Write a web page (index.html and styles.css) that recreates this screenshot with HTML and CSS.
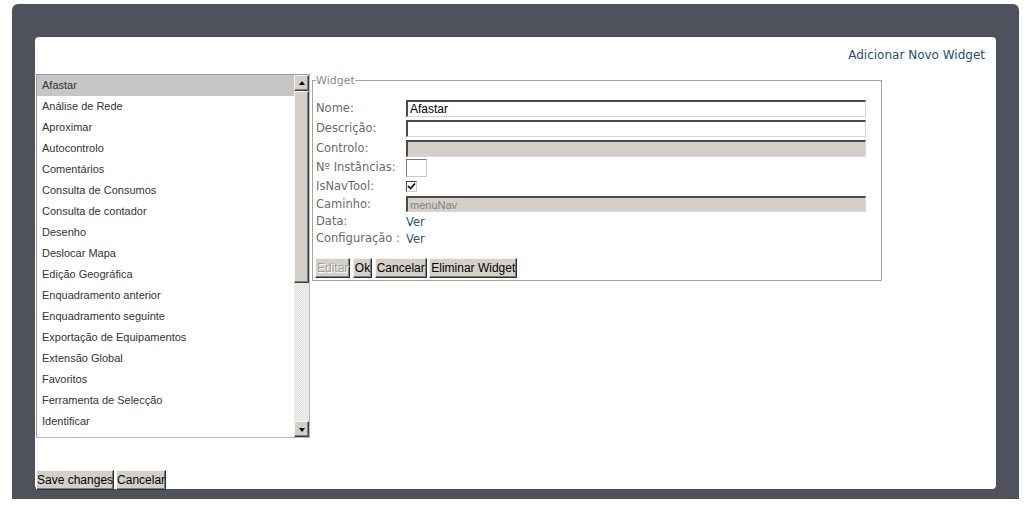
FILE: index.html
```html
<!DOCTYPE html>
<html lang="pt">
<head>
<meta charset="utf-8">
<title>Widgets</title>
<link rel="stylesheet" href="styles.css">
</head>
<body>
<div class="frame">
  <div class="panel">
    <div class="header"><a class="add-link" href="#">Adicionar Novo Widget</a></div>
    <div class="main">
      <div class="listbox">
        <ul class="items">
          <li class="selected">Afastar</li>
          <li>Análise de Rede</li>
          <li>Aproximar</li>
          <li>Autocontrolo</li>
          <li>Comentários</li>
          <li>Consulta de Consumos</li>
          <li>Consulta de contador</li>
          <li>Desenho</li>
          <li>Deslocar Mapa</li>
          <li>Edição Geográfica</li>
          <li>Enquadramento anterior</li>
          <li>Enquadramento seguinte</li>
          <li>Exportação de Equipamentos</li>
          <li>Extensão Global</li>
          <li>Favoritos</li>
          <li>Ferramenta de Selecção</li>
          <li>Identificar</li>
        </ul>
        <div class="scrollbar">
          <div class="sb-btn"><span class="arrow-up"></span></div>
          <div class="sb-thumb"></div>
          <div class="sb-track"></div>
          <div class="sb-btn"><span class="arrow-down"></span></div>
        </div>
      </div>
      <fieldset class="widget">
        <legend>Widget</legend>
        <div class="row r20"><span class="lbl">Nome:</span><input class="text" type="text" value="Afastar"></div>
        <div class="row r20"><span class="lbl">Descrição:</span><input class="text" type="text" value=""></div>
        <div class="row r20"><span class="lbl">Controlo:</span><input class="text disabled" type="text" value="" disabled></div>
        <div class="row r19"><span class="lbl">Nº Instâncias:</span><input class="small" type="text" value=""></div>
        <div class="row r18"><span class="lbl">IsNavTool:</span><span class="check"><svg width="9" height="9" viewBox="0 0 9 9"><path d="M1 4 L3.5 6.5 L8 1.5" fill="none" stroke="#000" stroke-width="1.6"/></svg></span></div>
        <div class="row r18"><span class="lbl">Caminho:</span><input class="text disabled path" type="text" value="menuNav" disabled></div>
        <div class="row r17"><span class="lbl">Data:</span><a class="link" href="#">Ver</a></div>
        <div class="row r17"><span class="lbl">Configuração :</span><a class="link" href="#">Ver</a></div>
        <div class="actions">
          <button class="btn" disabled>Editar</button>
          <button class="btn">Ok</button>
          <button class="btn">Cancelar</button>
          <button class="btn">Eliminar Widget</button>
        </div>
      </fieldset>
    </div>
    <div class="footer">
      <button class="btn">Save changes</button>
      <button class="btn">Cancelar</button>
    </div>
  </div>
</div>
</body>
</html>
```
FILE: styles.css
```css
html, body {
  margin: 0;
  padding: 0;
  background: #fff;
}

body {
  font-family: "DejaVu Sans", Verdana, sans-serif;
  font-size: 11px;
}

.frame {
  margin: 4px 5px 0 12px;
  padding: 33px 23px 10px 23px;
  background: #4f525d;
  border-radius: 6px 6px 0 0;
}

.panel {
  background: #fff;
  border-radius: 4px;
  height: 452px;
  box-sizing: border-box;
}

.header {
  height: 37px;
  box-sizing: border-box;
  padding: 11px 11px 0 0;
  display: flex;
  justify-content: flex-end;
  line-height: 14px;
}

.add-link {
  color: #24506e;
  text-decoration: none;
  font-family: "DejaVu Sans", Verdana, sans-serif;
  font-size: 12px;
}

.link {
  color: #2a5576;
  text-decoration: none;
  font-family: "DejaVu Sans", Verdana, sans-serif;
  font-size: 11.5px;
}

.main {
  display: flex;
  align-items: flex-start;
  height: 364px;
}

.listbox {
  margin-left: 1px;
  width: 274px;
  height: 364px;
  box-sizing: border-box;
  border: 1px solid #9a9a9a;
  border-right-color: #b8b8b8;
  border-bottom-color: #b8b8b8;
  display: flex;
  overflow: hidden;
}

.items {
  list-style: none;
  margin: 0;
  padding: 0;
  flex: 1;
  overflow: hidden;
  font-family: "Liberation Sans", Arial, sans-serif;
  font-size: 11px;
  color: #333;
}

.items li {
  height: 21px;
  line-height: 21px;
  padding-left: 5px;
  white-space: nowrap;
}

.items li.selected {
  background: #c6c6c6;
}

.scrollbar {
  width: 15px;
  display: flex;
  flex-direction: column;
}

.sb-btn {
  height: 16px;
  box-sizing: border-box;
  background: #d4d0c8;
  border: 1px solid;
  border-color: #f4f4f4 #404040 #404040 #f4f4f4;
  box-shadow: inset -1px -1px #808080;
  display: flex;
  align-items: center;
  justify-content: center;
}

.arrow-up {
  width: 0;
  height: 0;
  border-left: 3.5px solid transparent;
  border-right: 3.5px solid transparent;
  border-bottom: 4px solid #000;
  margin-bottom: 1px;
}

.arrow-down {
  width: 0;
  height: 0;
  border-left: 3.5px solid transparent;
  border-right: 3.5px solid transparent;
  border-top: 4px solid #000;
  margin-top: 1px;
}

.sb-thumb {
  height: 192px;
  box-sizing: border-box;
  background: #d4d0c8;
  border: 1px solid;
  border-color: #f4f4f4 #404040 #404040 #f4f4f4;
  box-shadow: inset -1px -1px #808080;
}

.sb-track {
  flex: 1;
  background: repeating-conic-gradient(#f2f2f2 0 25%, #e0e0e0 0 50%) 0 0 / 2px 2px;
}

.widget {
  margin: 0 0 0 2px;
  width: 570px;
  box-sizing: border-box;
  padding: 11px 3px 2px 3px;
  border: 1px solid #a3a3a3;
  min-width: 0;
}

.widget legend {
  padding: 0;
  line-height: 13px;
  font-size: 11px;
  color: #8a8a8a;
}

.row {
  display: flex;
  align-items: center;
}

.r20 { height: 20px; }
.r19 { height: 19px; }
.r18 { height: 18px; }
.r17 { height: 17px; }

.lbl {
  width: 90px;
  flex: none;
  color: #6a6a6a;
  white-space: nowrap;
  line-height: 13px;
  font-size: 11.5px;
}

.text {
  width: 460px;
  height: 17px;
  box-sizing: border-box;
  margin: 0;
  padding: 0 2px;
  border-style: solid;
  border-width: 2px 1px 1px 2px;
  border-color: #4a4a4a #d6d6d6 #d6d6d6 #4a4a4a;
  background: #fff;
  font-family: "Liberation Sans", Arial, sans-serif;
  font-size: 12px;
  color: #000;
  outline: none;
}

.text.disabled {
  background: #d4d0c8;
  color: #7a7a7a;
}

.text.path {
  height: 16px;
  font-size: 11px;
  color: #808080;
}

.small {
  width: 21px;
  height: 18px;
  box-sizing: border-box;
  margin: 0;
  padding: 0;
  border: 1px solid;
  border-color: #7a7a7a #c8c8c8 #c8c8c8 #7a7a7a;
  background: #fff;
}

.check {
  width: 11px;
  height: 11px;
  box-sizing: border-box;
  border: 1px solid;
  border-color: #4a4a4a #d0d0d0 #d0d0d0 #4a4a4a;
  background: #fff;
  display: flex;
  align-items: center;
  justify-content: center;
}

.check svg {
  display: block;
}

.actions {
  margin-top: 11px;
  margin-left: -1px;
  display: flex;
  gap: 2.5px;
  height: 20px;
}

.btn {
  height: 20px;
  margin: 0;
  padding: 0 1px;
  box-sizing: border-box;
  background: #d4d0c8;
  border: 1px solid;
  border-color: #f4f4f4 #303030 #303030 #f4f4f4;
  box-shadow: inset -1px -1px #808080;
  font-family: "Liberation Sans", Arial, sans-serif;
  font-size: 12px;
  line-height: 16px;
  color: #000;
  border-radius: 0;
}

.btn:disabled {
  color: #a0a0a0;
  text-shadow: 1px 1px #fff;
}

.footer {
  margin-top: 32px;
  padding-left: 1px;
  display: flex;
  gap: 2px;
}

.footer .btn {
  padding: 0;
}
```
